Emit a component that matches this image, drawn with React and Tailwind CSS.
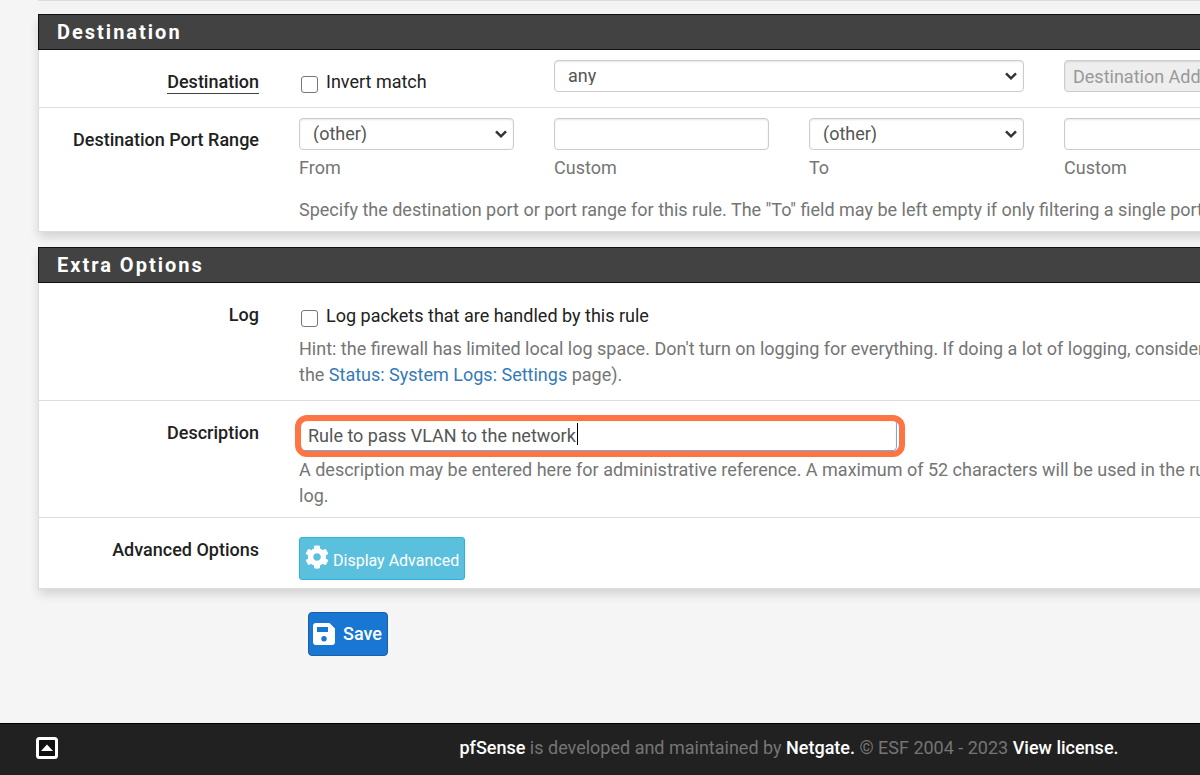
import React from "react";
import { FaSave, FaCog } from "react-icons/fa";

const control =
  "block h-8 w-full rounded border px-2 text-lg leading-none text-[#555555] shadow-[inset_0_1px_2px_rgba(0,0,0,0.1)] outline-none";

function Panel({ title, children }) {
  return (
    <section className="mx-[38px] border border-[#dddddd] bg-white shadow-[0_6px_10px_-1px_rgba(0,0,0,0.15)]">
      <h2 className="-mx-px -mt-px flex h-9 items-center border border-[#111111] bg-[#424242] px-[18px] text-xl font-bold tracking-widest text-white">
        {title}
      </h2>
      {children}
    </section>
  );
}

function Row({ label, htmlFor, underline, className, children }) {
  return (
    <div className={"flex border-b border-[#dddddd] last:border-b-0 " + className}>
      <div className="w-[220px] shrink-0 pt-[19px] text-right text-lg leading-[26px] font-medium text-[#212121]">
        <label htmlFor={htmlFor} className={underline ? "inline-block border-b border-[#424242] leading-[22px]" : ""}>
          {label}
        </label>
      </div>
      <div className="ml-10 min-w-0 flex-1 text-lg leading-[26px] text-[#757575]">{children}</div>
    </div>
  );
}

function Select({ id, label, value }) {
  return (
    <div className="relative">
      <select id={id} aria-label={label} defaultValue={value} className={control + " appearance-none border-[#cccccc] bg-white pl-[13px]"}>
        <option>{value}</option>
      </select>
      <svg viewBox="0 0 14 10" className="pointer-events-none absolute top-[11px] right-[6px] h-[10px] w-[14px]" aria-hidden="true">
        <path d="M2 2.3 7 7.3 12 2.3" fill="none" stroke="#333333" strokeWidth="2.5" />
      </svg>
    </div>
  );
}

function Check({ id, children }) {
  return (
    <div className="flex items-center gap-2 text-[#212121]">
      <input
        id={id}
        type="checkbox"
        className="mt-1 ml-[2px] size-[17px] appearance-none rounded-[3px] border border-[#767676] bg-white checked:bg-[#1976d2]"
      />
      <label htmlFor={id} className="leading-[26px]">{children}</label>
    </div>
  );
}

function Port({ id, label, select }) {
  return (
    <div>
      {select ? (
        <Select id={id} value="(other)" />
      ) : (
        <input id={id} type="text" className={control + " border-[#cccccc] bg-white"} />
      )}
      <label htmlFor={id} className="mt-[5px] block">{label}</label>
    </div>
  );
}

export default function App() {
  return (
    <div className="min-h-screen overflow-x-hidden bg-[#f5f5f5] font-['Roboto',sans-serif]">
      <div className="flex min-h-screen min-w-[1578px] flex-col">
        <div className="mx-[38px] h-px bg-[#dddddd] shadow-[0_4px_8px_rgba(0,0,0,0.15)]" />
        <main className="mt-[13px] flex flex-col">
          <Panel title="Destination">
            <Row label="Destination" htmlFor="invert" underline className="h-[58px]">
              <div className="grid grid-cols-[215px_470px_1fr] gap-10 pt-[10px]">
                <div className="pt-[9px]">
                  <Check id="invert">Invert match</Check>
                </div>
                <Select id="dst" label="Destination type" value="any" />
                <input
                  type="text"
                  disabled
                  aria-label="Destination Address"
                  placeholder="Destination Address"
                  className={control + " border-[#cccccc] bg-[#eeeeee] placeholder:text-[#999999]"}
                />
              </div>
            </Row>
            <Row label="Destination Port Range" htmlFor="from" className="h-[123px]">
              <div className="grid grid-cols-[215px_215px_215px_215px] gap-10 pt-[10px]">
                <Port id="from" label="From" select />
                <Port id="from-custom" label="Custom" />
                <Port id="to" label="To" select />
                <Port id="to-custom" label="Custom" />
              </div>
              <p className="mt-4">
                Specify the destination port or port range for this rule. The "To" field may be left empty if only filtering a single port.
              </p>
            </Row>
          </Panel>
          <div className="h-[15px]" />
          <Panel title="Extra Options">
            <Row label="Log" htmlFor="log" className="h-[118px]">
              <div className="pt-5">
                <Check id="log">Log packets that are handled by this rule</Check>
              </div>
              <p className="mt-[7px]">
                Hint: the firewall has limited local log space. Don't turn on logging for everything. If doing a lot of logging, consider using a remote syslog server (see
                <br />
                the <a href="#settings" className="text-[#337ab7]">Status: System Logs: Settings</a> page).
              </p>
            </Row>
            <Row label="Description" htmlFor="descr" className="h-[117px]">
              <div className="relative mt-[18px] w-[598px]">
                <input
                  id="descr"
                  type="text"
                  defaultValue="Rule to pass VLAN to the network"
                  className={control + " border-[#66afe9] bg-white"}
                />
                <span className="absolute top-1 left-[278px] h-[22px] w-px bg-black" />
                <span className="pointer-events-none absolute -top-1 -right-2 -bottom-[6px] -left-1 rounded-xl border-6 border-[#ff7443]" />
              </div>
              <p className="mt-[6px]">
                A description may be entered here for administrative reference. A maximum of 52 characters will be used in the ruleset and displayed in the firewall
                <br />
                log.
              </p>
            </Row>
            <Row label="Advanced Options" htmlFor="advanced" className="h-[70px]">
              <button
                id="advanced"
                type="button"
                className="mt-[19px] flex h-[43px] items-center gap-1 rounded-[3px] border border-[#28b5d9] bg-[#5bc0de] px-[5px] text-base text-white"
              >
                <FaCog className="mb-1 size-6" aria-hidden="true" />
                <span className="mt-1">Display Advanced</span>
              </button>
            </Row>
          </Panel>
          <button
            type="button"
            className="mt-[23px] ml-[308px] flex h-11 w-20 items-center gap-2 rounded border border-[#1a5fa8] bg-[#1976d2] pl-1 text-lg font-medium text-white"
          >
            <svg viewBox="0 0 22 22" className="size-[22px]" aria-hidden="true">
              <path
                fill="#ffffff"
                fillRule="evenodd"
                d="M3 0H16.5L22 5.5V19a3 3 0 0 1-3 3H3a3 3 0 0 1-3-3V3a3 3 0 0 1 3-3zM4 4v5h11V4zM11 13a2.7 2.7 0 1 0 0 5.4a2.7 2.7 0 0 0 0-5.4z"
              />
            </svg>
            Save
          </button>
        </main>
        <footer className="relative mt-auto flex h-[52px] items-center justify-center border-t border-black bg-[#212121] pb-1 text-lg text-[#757575]">
          <a href="#top" aria-label="Back to top" className="absolute left-9">
            <svg viewBox="0 0 22 22" className="size-[22px]" aria-hidden="true">
              <rect x="1.5" y="1.5" width="19" height="19" rx="2" fill="#111111" stroke="#ffffff" strokeWidth="3" />
              <path d="M5 14 11 7.5 17 14z" fill="#ffffff" />
            </svg>
          </a>
          <p>
            <a href="#pfsense" className="font-medium text-white">pfSense</a> is developed and maintained by{" "}
            <a href="#netgate" className="font-medium text-white">Netgate.</a> © ESF 2004 - 2023{" "}
            <a href="#license" className="font-medium text-white">View license.</a>
          </p>
        </footer>
      </div>
    </div>
  );
}
